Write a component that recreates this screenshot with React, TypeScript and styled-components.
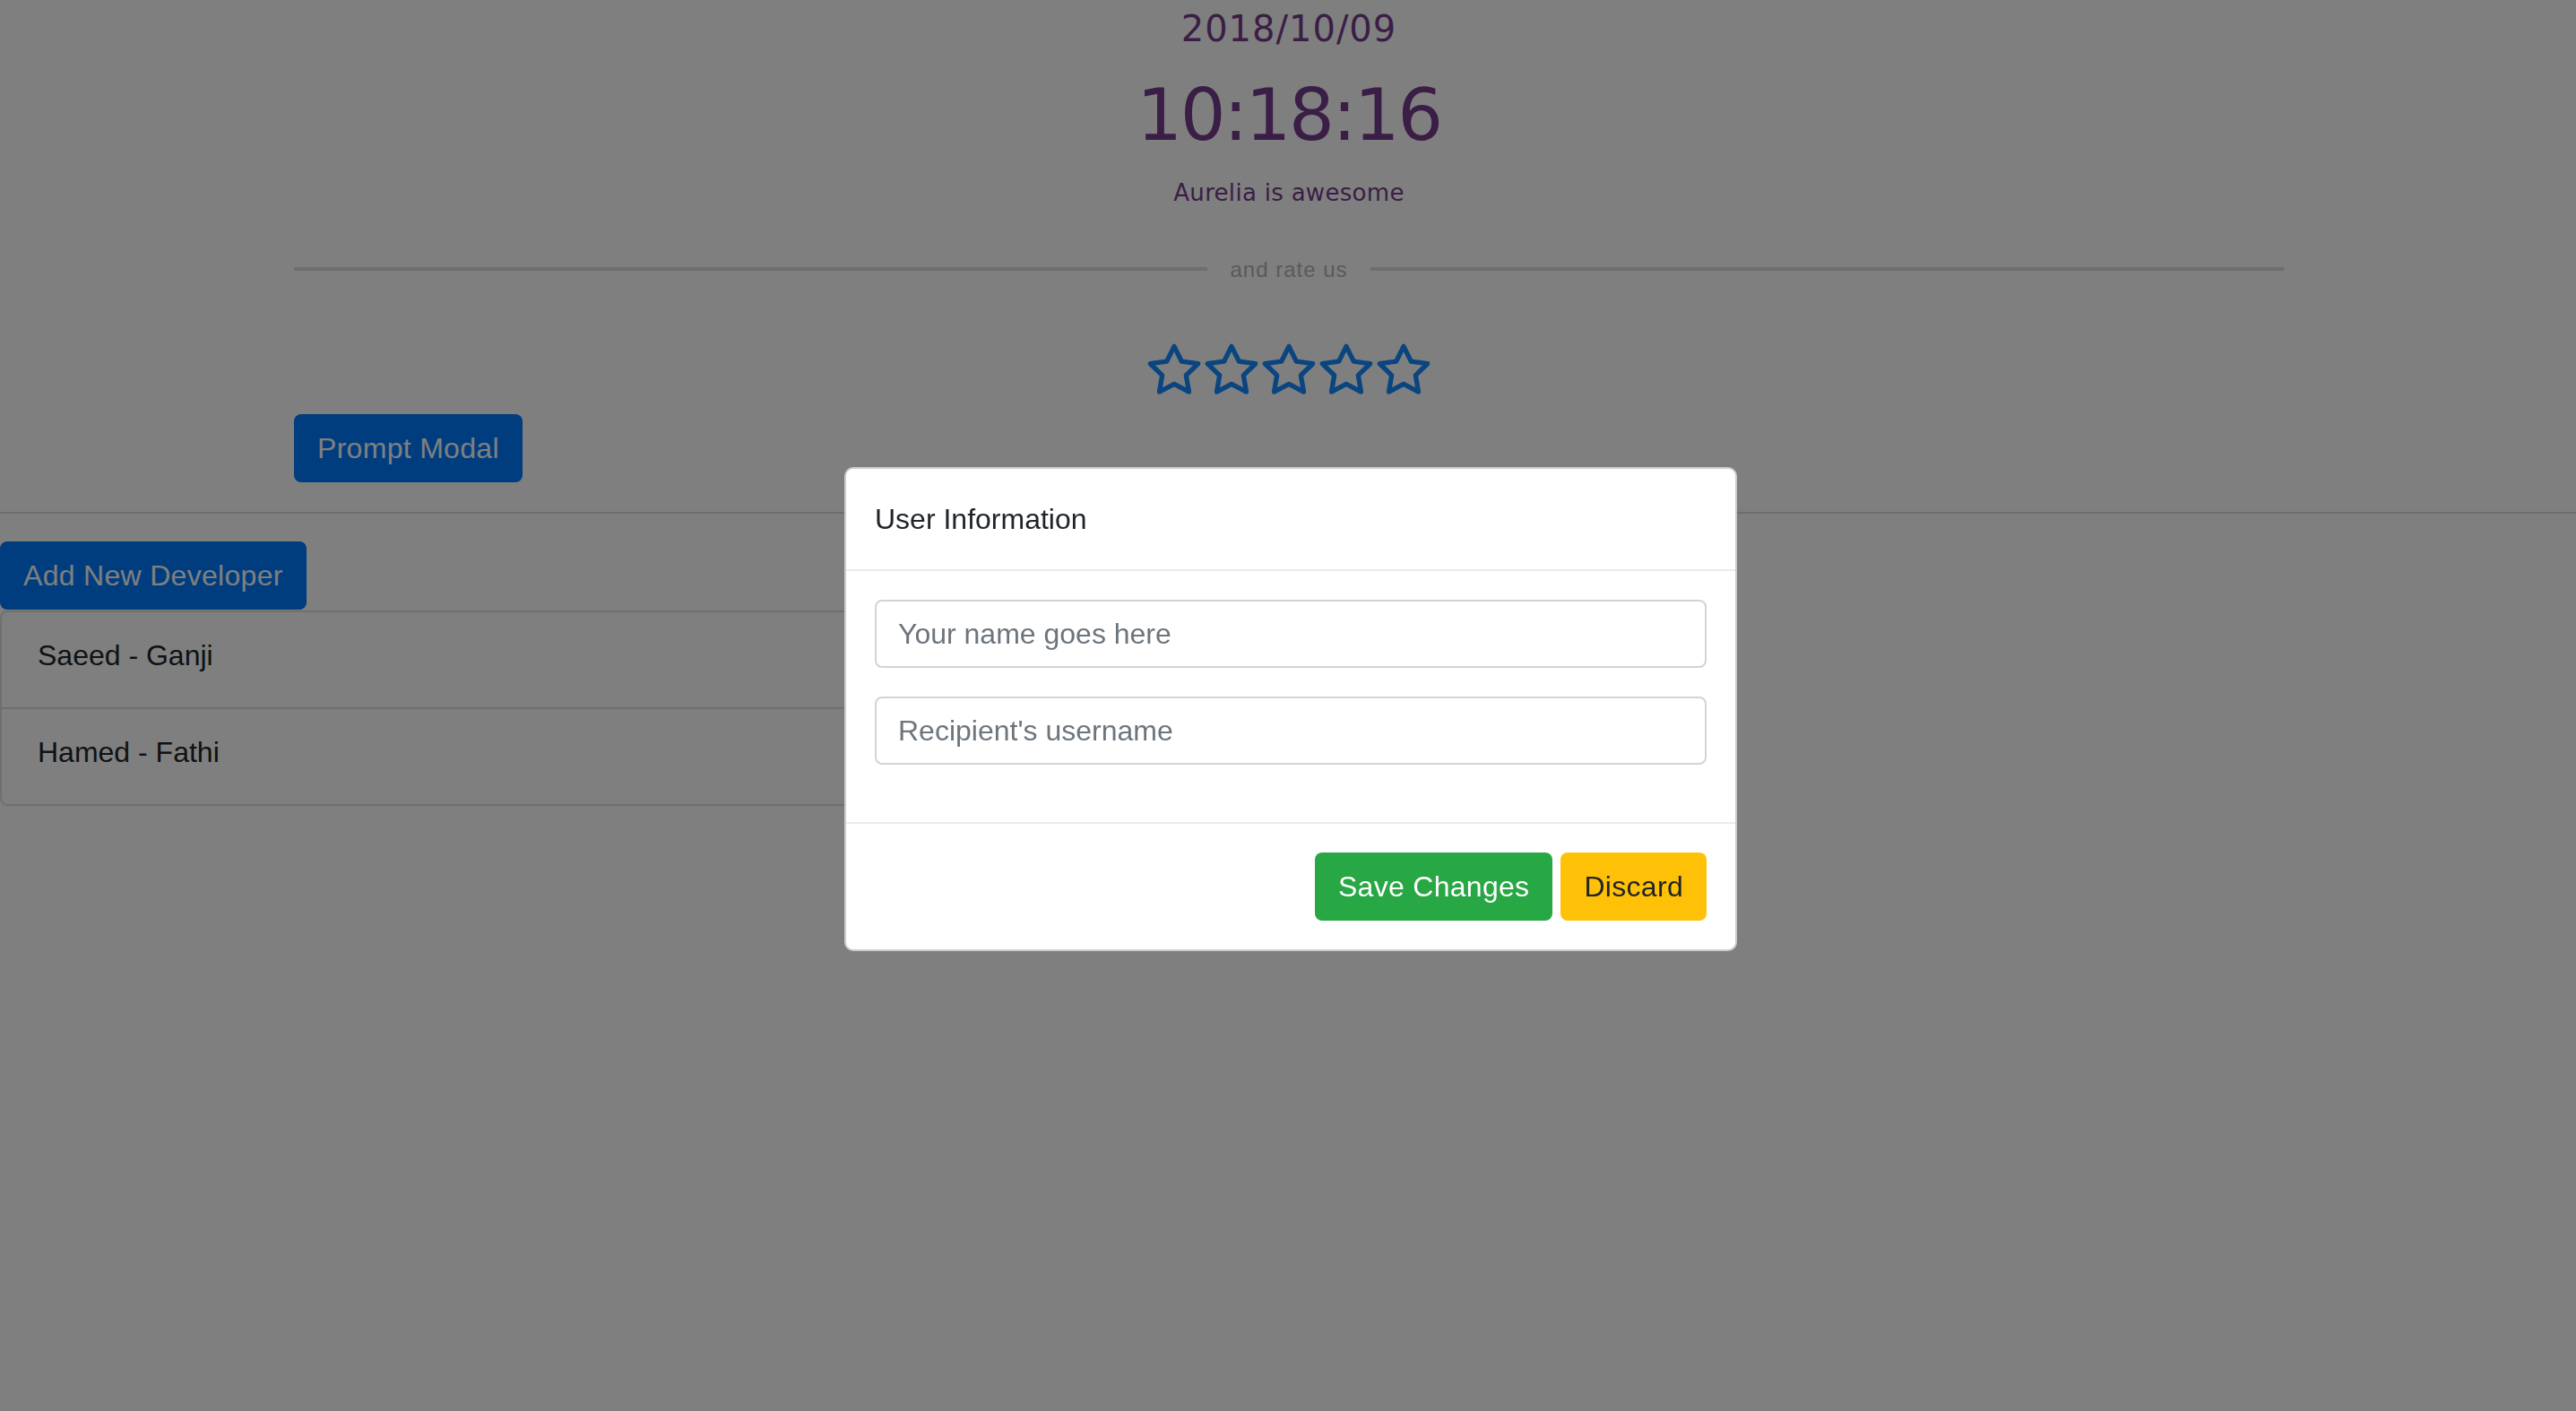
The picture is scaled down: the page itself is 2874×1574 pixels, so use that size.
import React from 'react'
import styled, { createGlobalStyle } from 'styled-components'

const GlobalStyle = createGlobalStyle`
  html, body {
    margin: 0;
    padding: 0;
    background: #ffffff;
  }
  body {
    font-family: 'Liberation Sans', Arial, sans-serif;
    color: #212529;
  }
  * {
    box-sizing: border-box;
  }
`

const Page = styled.div`
  min-height: 100vh;
`

const Container = styled.div`
  width: 2222px;
  margin: 0 auto;
  padding-left: 2px;
`

const Clock = styled.div`
  padding-top: 8px;
  text-align: center;
  font-family: 'DejaVu Sans', Verdana, sans-serif;
  color: #773d8d;
`

const DateLine = styled.div`
  font-size: 40px;
  line-height: 48px;
  letter-spacing: 1px;
`

const TimeLine = styled.div`
  margin-top: 25px;
  font-size: 80px;
  line-height: 96px;
  letter-spacing: -2.5px;
`

const Slogan = styled.div`
  margin-top: 22px;
  font-size: 26px;
  line-height: 32px;
  letter-spacing: 0.3px;
`

const Divider = styled.div`
  margin-top: 54px;
  display: flex;
  align-items: center;
  gap: 25px;
  font-size: 24px;
  line-height: 32px;
  letter-spacing: 1px;
  color: #b4b4b4;
  &::before,
  &::after {
    content: '';
    flex: 1;
    height: 4px;
    margin-top: -2px;
    background: #dcdcdc;
  }
`

const Stars = styled.div`
  margin-top: 64px;
  display: flex;
  justify-content: center;
`

const Button = styled.button<{ $variant: 'primary' | 'success' | 'warning' }>`
  display: block;
  padding: 12px 24px;
  height: 76px;
  font-family: 'Liberation Sans', Arial, sans-serif;
  font-size: 32px;
  line-height: 48px;
  letter-spacing: 0.3px;
  border: 2px solid transparent;
  border-radius: 8px;
  cursor: pointer;
  background: ${(p) =>
    p.$variant === 'primary' ? '#007bff' : p.$variant === 'success' ? '#28a745' : '#ffc107'};
  color: ${(p) => (p.$variant === 'warning' ? '#212529' : '#ffffff')};
`

const PromptButton = styled(Button)`
  margin-top: 17px;
`

const Rule = styled.hr`
  margin: 33px 0 0;
  border: none;
  border-top: 2px solid #dcdcdc;
`

const Developers = styled.section`
  width: 50%;
`

const AddButton = styled(Button)`
  margin-top: 31px;
`

const List = styled.ul`
  margin: 1px 0 0;
  padding: 0;
  list-style: none;
  border: 2px solid #dfdfdf;
  border-radius: 8px;
`

const ListItem = styled.li`
  padding: 24px 40px 34px;
  font-size: 32px;
  line-height: 48px;
  color: #212529;
  & + & {
    border-top: 2px solid #dfdfdf;
  }
`

const Backdrop = styled.div`
  position: fixed;
  inset: 0;
  display: flex;
  align-items: center;
  justify-content: center;
  padding: 8px 0 0 6px;
  background: rgba(0, 0, 0, 0.5);
`

const Dialog = styled.div`
  width: 996px;
  background: #ffffff;
  border: 2px solid rgba(0, 0, 0, 0.2);
  border-radius: 10px;
`

const DialogHeader = styled.div`
  padding: 32px;
  border-bottom: 2px solid #e9ecef;
`

const DialogTitle = styled.h5`
  margin: 0;
  font-size: 32px;
  line-height: 48px;
  font-weight: 400;
  color: #212529;
`

const DialogBody = styled.div`
  padding: 32px;
`

const Input = styled.input`
  display: block;
  width: 100%;
  height: 76px;
  margin-bottom: 32px;
  padding: 12px 24px;
  font-family: 'Liberation Sans', Arial, sans-serif;
  font-size: 32px;
  color: #495057;
  border: 2px solid #ced4da;
  border-radius: 8px;
  outline: none;
  &::placeholder {
    color: #6c757d;
  }
`

const DialogFooter = styled.div`
  display: flex;
  justify-content: flex-end;
  gap: 9px;
  padding: 32px;
  border-top: 2px solid #e9ecef;
`

const Star = () => (
  <svg width='64' height='64' viewBox='0 0 24 24' fill='none' stroke='#168bff' strokeWidth='2' strokeLinejoin='round'>
    <polygon points='12,2 15.09,8.26 22,9.27 17,14.14 18.18,21.02 12,17.77 5.82,21.02 7,14.14 2,9.27 8.91,8.26' />
  </svg>
)

const developers = ['Saeed - Ganji', 'Hamed - Fathi']

const App = () => {
  return (
    <Page>
      <GlobalStyle />
      <Container>
        <Clock>
          <DateLine>2018/10/09</DateLine>
          <TimeLine>10:18:16</TimeLine>
          <Slogan>Aurelia is awesome</Slogan>
        </Clock>
        <Divider>and rate us</Divider>
        <Stars>
          {[0, 1, 2, 3, 4].map((i) => (
            <Star key={i} />
          ))}
        </Stars>
        <PromptButton $variant='primary'>Prompt Modal</PromptButton>
      </Container>
      <Rule />
      <Developers>
        <AddButton $variant='primary'>Add New Developer</AddButton>
        <List>
          {developers.map((name) => (
            <ListItem key={name}>{name}</ListItem>
          ))}
        </List>
      </Developers>
      <Backdrop>
        <Dialog>
          <DialogHeader>
            <DialogTitle>User Information</DialogTitle>
          </DialogHeader>
          <DialogBody>
            <Input placeholder='Your name goes here' />
            <Input placeholder="Recipient's username" />
          </DialogBody>
          <DialogFooter>
            <Button $variant='success'>Save Changes</Button>
            <Button $variant='warning'>Discard</Button>
          </DialogFooter>
        </Dialog>
      </Backdrop>
    </Page>
  )
}

export default App
